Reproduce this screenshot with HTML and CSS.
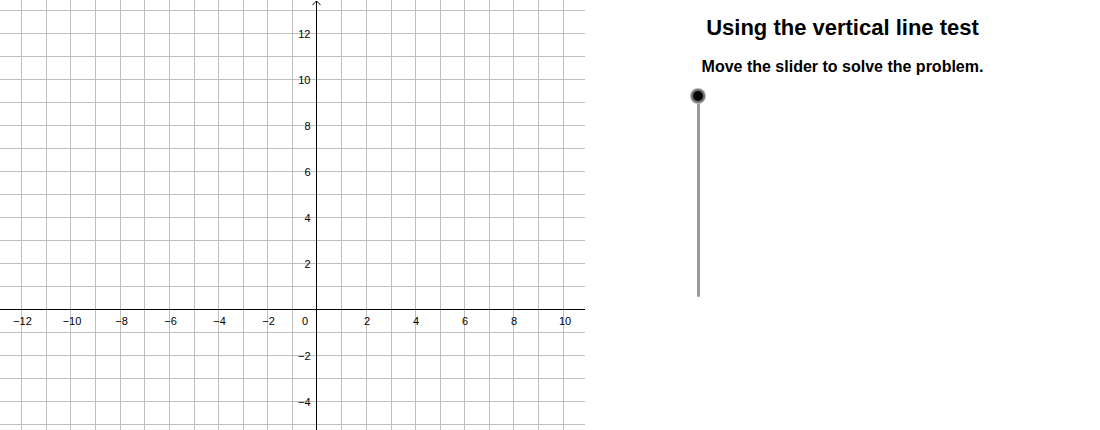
FILE: index.html
```html
<!DOCTYPE html>
<html>
<head>
<meta charset="utf-8">
<link rel="stylesheet" href="styles.css">
</head>
<body>
<div class="app">
  <svg class="graph" width="585" height="430" viewBox="0 0 585 430" xmlns="http://www.w3.org/2000/svg">
    <g class="grid" shape-rendering="crispEdges">
      <line x1="21.5" y1="0" x2="21.5" y2="430"/>
      <line x1="46.5" y1="0" x2="46.5" y2="430"/>
      <line x1="70.5" y1="0" x2="70.5" y2="430"/>
      <line x1="95.5" y1="0" x2="95.5" y2="430"/>
      <line x1="120.5" y1="0" x2="120.5" y2="430"/>
      <line x1="144.5" y1="0" x2="144.5" y2="430"/>
      <line x1="169.5" y1="0" x2="169.5" y2="430"/>
      <line x1="194.5" y1="0" x2="194.5" y2="430"/>
      <line x1="218.5" y1="0" x2="218.5" y2="430"/>
      <line x1="243.5" y1="0" x2="243.5" y2="430"/>
      <line x1="267.5" y1="0" x2="267.5" y2="430"/>
      <line x1="292.5" y1="0" x2="292.5" y2="430"/>
      <line x1="341.5" y1="0" x2="341.5" y2="430"/>
      <line x1="366.5" y1="0" x2="366.5" y2="430"/>
      <line x1="391.5" y1="0" x2="391.5" y2="430"/>
      <line x1="415.5" y1="0" x2="415.5" y2="430"/>
      <line x1="440.5" y1="0" x2="440.5" y2="430"/>
      <line x1="464.5" y1="0" x2="464.5" y2="430"/>
      <line x1="489.5" y1="0" x2="489.5" y2="430"/>
      <line x1="513.5" y1="0" x2="513.5" y2="430"/>
      <line x1="538.5" y1="0" x2="538.5" y2="430"/>
      <line x1="563.5" y1="0" x2="563.5" y2="430"/>

      <line x1="0" y1="10.5" x2="585" y2="10.5"/>
      <line x1="0" y1="33.5" x2="585" y2="33.5"/>
      <line x1="0" y1="56.5" x2="585" y2="56.5"/>
      <line x1="0" y1="79.5" x2="585" y2="79.5"/>
      <line x1="0" y1="102.5" x2="585" y2="102.5"/>
      <line x1="0" y1="125.5" x2="585" y2="125.5"/>
      <line x1="0" y1="148.5" x2="585" y2="148.5"/>
      <line x1="0" y1="171.5" x2="585" y2="171.5"/>
      <line x1="0" y1="194.5" x2="585" y2="194.5"/>
      <line x1="0" y1="217.5" x2="585" y2="217.5"/>
      <line x1="0" y1="240.5" x2="585" y2="240.5"/>
      <line x1="0" y1="263.5" x2="585" y2="263.5"/>
      <line x1="0" y1="286.5" x2="585" y2="286.5"/>
      <line x1="0" y1="332.5" x2="585" y2="332.5"/>
      <line x1="0" y1="355.5" x2="585" y2="355.5"/>
      <line x1="0" y1="378.5" x2="585" y2="378.5"/>
      <line x1="0" y1="401.5" x2="585" y2="401.5"/>
      <line x1="0" y1="424.5" x2="585" y2="424.5"/>
    </g>
    <g class="axes" shape-rendering="crispEdges">
      <line x1="0" y1="309.5" x2="585" y2="309.5"/>
      <line x1="316.5" y1="0.5" x2="316.5" y2="430"/>
    </g>
    <polyline class="arrow" points="312.5,5 316.5,1 320.5,5"/>
    <g class="labels xlabels">
      <text x="22.5" y="325">−12</text>
      <text x="72" y="325">−10</text>
      <text x="121.5" y="325">−8</text>
      <text x="170.5" y="325">−6</text>
      <text x="219.5" y="325">−4</text>
      <text x="268.5" y="325">−2</text>
      <text x="305" y="325">0</text>
      <text x="367" y="325">2</text>
      <text x="416" y="325">4</text>
      <text x="465" y="325">6</text>
      <text x="514" y="325">8</text>
      <text x="565" y="325">10</text>
    </g>
    <g class="labels ylabels">
      <text x="310.5" y="37.5">12</text>
      <text x="310.5" y="83.5">10</text>
      <text x="310.5" y="129.5">8</text>
      <text x="310.5" y="175.5">6</text>
      <text x="310.5" y="221.5">4</text>
      <text x="310.5" y="267.5">2</text>
      <text x="310.5" y="359.5">−2</text>
      <text x="310.5" y="405.5">−4</text>
    </g>
  </svg>
  <div class="panel">
    <h1 class="title">Using the vertical line test</h1>
    <p class="subtitle">Move the slider to solve the problem.</p>
    <div class="slider">
      <div class="knob"></div>
    </div>
  </div>
</div>
</body>
</html>
```

FILE: styles.css
```css
html, body {
  margin: 0;
  padding: 0;
  background: #ffffff;
}

.app {
  display: flex;
  width: 1100px;
  height: 430px;
  overflow: hidden;
  font-family: "Liberation Sans", Arial, sans-serif;
}

.graph {
  display: block;
  flex: none;
}

.grid line {
  stroke: #c0c0c0;
  stroke-width: 1;
}

.axes line {
  stroke: #000000;
  stroke-width: 1;
}

.arrow {
  fill: none;
  stroke: #000000;
  stroke-width: 1;
}

.labels text {
  font-family: "Liberation Sans", Arial, sans-serif;
  font-size: 11px;
  fill: #000000;
}

.xlabels text {
  text-anchor: middle;
}

.ylabels text {
  text-anchor: end;
}

.panel {
  flex: 1;
  text-align: center;
  color: #000000;
}

.title {
  margin: 0;
  padding-top: 15px;
  font-size: 22px;
  line-height: 26px;
  font-weight: bold;
}

.subtitle {
  margin: 16px 0 0;
  font-size: 16px;
  line-height: 19px;
  font-weight: bold;
}

.slider {
  position: relative;
  margin-top: 20px;
  margin-left: 111.5px;
  width: 3px;
  height: 201px;
  background: #9a9a9a;
  border-radius: 1.5px;
}

.knob {
  position: absolute;
  top: -7.5px;
  left: -5.5px;
  width: 10px;
  height: 10px;
  border-radius: 50%;
  background: #000000;
  border: 2px solid #707070;
  box-shadow: 0 0 0 1px #b8b8b8;
}
```
